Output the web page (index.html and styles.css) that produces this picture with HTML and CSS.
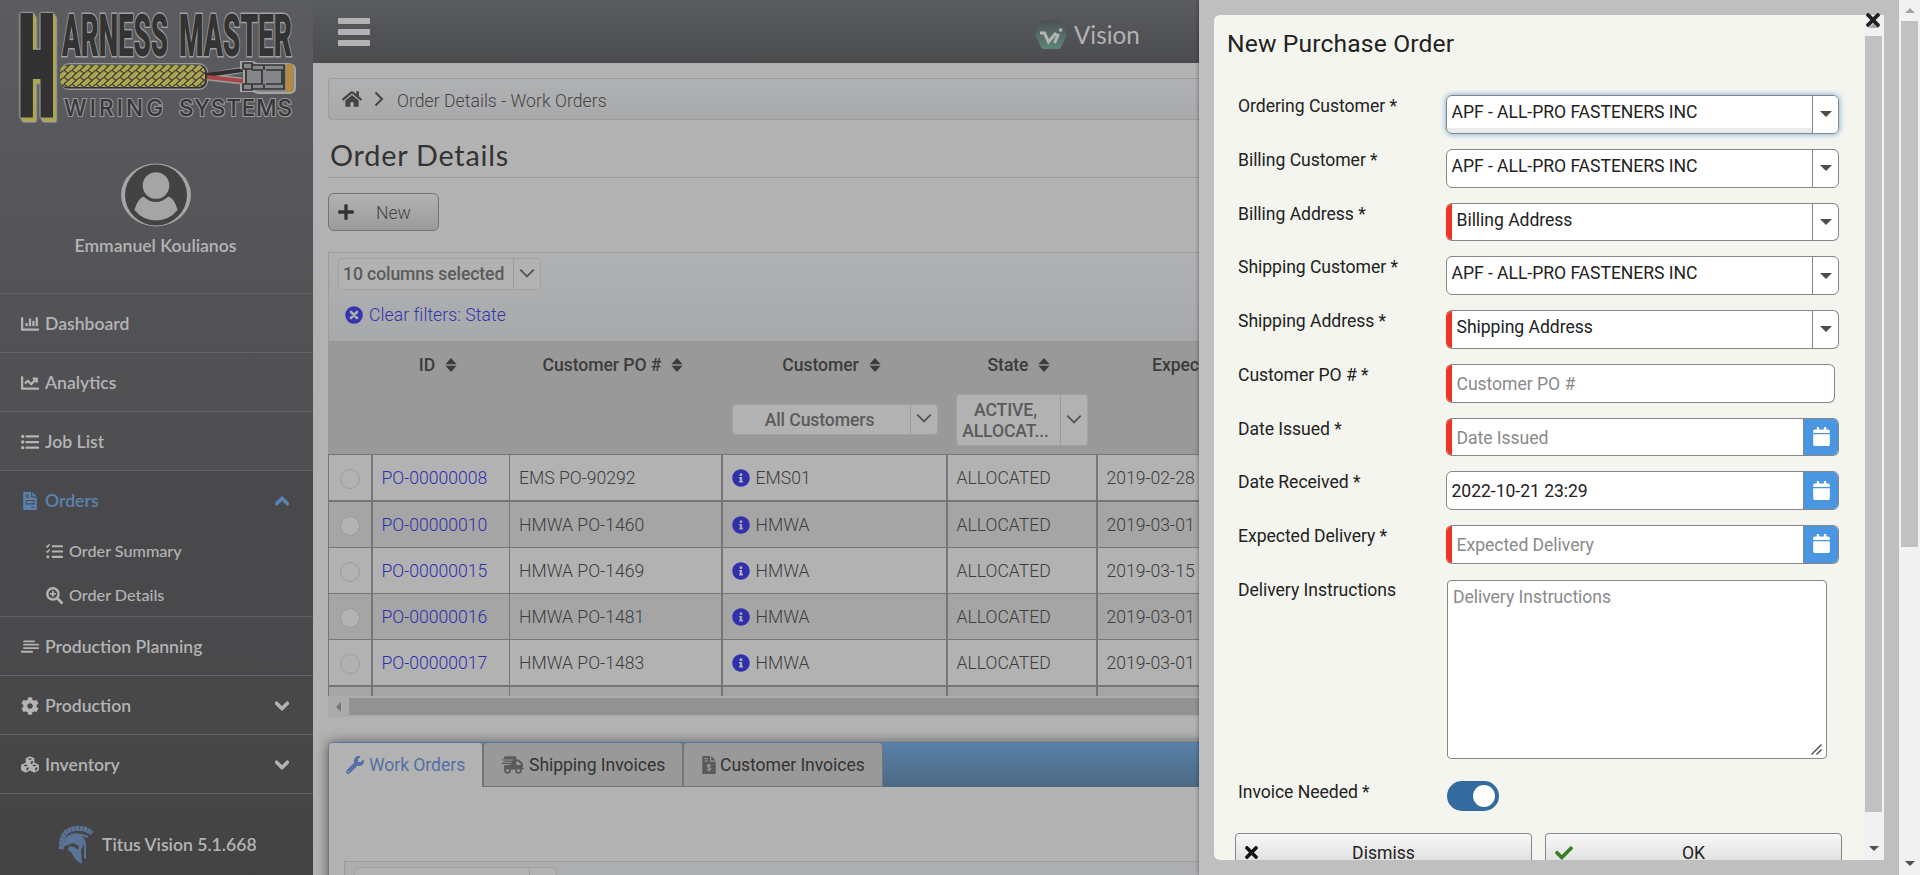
FILE: index.html
```html
<!DOCTYPE html>
<html lang="en">
<head>
<meta charset="utf-8">
<title>Order Details - Work Orders</title>
<link rel="stylesheet" href="styles.css">
</head>
<body>
<svg class="defs" width="0" height="0" aria-hidden="true">
  <symbol id="i-bar" viewBox="0 0 512 512"><path d="M332.8 320h38.400c6.400 0 12.800-6.400 12.800-12.800V172.800c0-6.400-6.400-12.800-12.800-12.800h-38.400c-6.400 0-12.800 6.400-12.800 12.800v134.400c0 6.400 6.400 12.800 12.800 12.800zm96 0h38.400c6.400 0 12.800-6.400 12.800-12.800V76.800c0-6.400-6.400-12.800-12.800-12.800h-38.400c-6.400 0-12.800 6.400-12.800 12.800v230.400c0 6.400 6.400 12.800 12.800 12.800zm-288 0h38.400c6.400 0 12.800-6.400 12.800-12.800v-70.400c0-6.400-6.400-12.800-12.800-12.800h-38.400c-6.400 0-12.800 6.400-12.800 12.800v70.400c0 6.400 6.400 12.800 12.800 12.800zm96 0h38.400c6.400 0 12.800-6.400 12.800-12.800V108.800c0-6.400-6.400-12.800-12.800-12.800h-38.400c-6.400 0-12.800 6.400-12.800 12.800v198.400c0 6.400 6.400 12.800 12.800 12.800zM496 384H64V80c0-8.840-7.160-16-16-16H16C7.160 64 0 71.160 0 80v336c0 17.670 14.330 32 32 32h464c8.840 0 16-7.160 16-16v-32c0-8.840-7.160-16-16-16z"/></symbol>
  <symbol id="i-line" viewBox="0 0 512 512"><path d="M496 384H64V80c0-8.840-7.160-16-16-16H16C7.160 64 0 71.160 0 80v336c0 17.670 14.330 32 32 32h464c8.840 0 16-7.160 16-16v-32c0-8.840-7.160-16-16-16zM464 96H345.940c-21.380 0-32.090 25.850-16.970 40.970l32.400 32.400L288 242.750l-73.370-73.370c-12.500-12.500-32.760-12.500-45.250 0l-68.690 68.690c-6.250 6.250-6.250 16.380 0 22.630l22.620 22.620c6.250 6.250 16.380 6.250 22.630 0L192 237.250l73.370 73.370c12.500 12.500 32.760 12.500 45.250 0l96-96 32.400 32.400c15.120 15.120 40.970 4.410 40.970-16.970V112c.01-8.840-7.150-16-15.990-16z"/></symbol>
  <symbol id="i-list" viewBox="0 0 512 512"><circle cx="48" cy="96" r="48"/><circle cx="48" cy="256" r="48"/><circle cx="48" cy="416" r="48"/><rect x="128" y="64" width="384" height="64" rx="16"/><rect x="128" y="224" width="384" height="64" rx="16"/><rect x="128" y="384" width="384" height="64" rx="16"/></symbol>
  <symbol id="i-tasks" viewBox="0 0 512 512"><path d="M10 85l35 32 70-84M10 245l35 32 70-84" fill="none" stroke="currentColor" stroke-width="42"/><circle cx="56" cy="416" r="46"/><rect x="176" y="64" width="336" height="64" rx="16"/><rect x="176" y="224" width="336" height="64" rx="16"/><rect x="176" y="384" width="336" height="64" rx="16"/></symbol>
  <symbol id="i-file" viewBox="0 0 384 512"><path fill-rule="evenodd" d="M24 0h200v136c0 13 11 24 24 24h136v328a24 24 0 0 1-24 24H24a24 24 0 0 1-24-24V24A24 24 0 0 1 24 0zM64 64v32h96V64zM64 128v32h96v-32zM64 224v128h256V224zM96 256h192v64H96zM224 416v32h96v-32zM256 0l128 128H256z"/></symbol>
  <symbol id="i-zoom" viewBox="0 0 512 512"><circle cx="208" cy="208" r="170" fill="none" stroke="currentColor" stroke-width="72"/><path d="M208 120v176M120 208h176" fill="none" stroke="currentColor" stroke-width="52"/><path d="M340 340l132 132" fill="none" stroke="currentColor" stroke-width="84" stroke-linecap="round"/></symbol>
  <symbol id="i-stream" viewBox="0 0 512 512"><rect x="64" y="70" width="330" height="50" rx="12"/><rect x="64" y="165" width="448" height="50" rx="12"/><rect x="64" y="260" width="448" height="50" rx="12"/><rect x="0" y="365" width="340" height="54" rx="12"/></symbol>
  <symbol id="i-cog" viewBox="0 0 512 512"><path d="M487.400 315.700l-42.600-24.600c4.300-23.200 4.300-47 0-70.200l42.600-24.600c4.900-2.800 7.100-8.600 5.500-14-11.100-35.600-30-67.800-54.700-94.600-3.800-4.100-10-5.100-14.800-2.300L380.800 110c-17.900-15.400-38.500-27.300-60.800-35.100V25.800c0-5.600-3.900-10.500-9.400-11.700-36.700-8.200-74.300-7.800-109.200 0-5.500 1.200-9.400 6.100-9.400 11.700V75c-22.200 7.900-42.800 19.800-60.800 35.100L88.700 85.500c-4.900-2.800-11-1.900-14.800 2.300-24.700 26.700-43.600 58.900-54.700 94.600-1.700 5.400.6 11.200 5.500 14L67.300 221c-4.300 23.200-4.300 47 0 70.200l-42.600 24.600c-4.900 2.800-7.100 8.600-5.500 14 11.100 35.600 30 67.800 54.700 94.600 3.800 4.100 10 5.100 14.800 2.300l42.600-24.600c17.900 15.400 38.500 27.300 60.800 35.100v49.200c0 5.600 3.900 10.500 9.400 11.700 36.700 8.200 74.300 7.800 109.200 0 5.500-1.200 9.400-6.100 9.400-11.700v-49.200c22.200-7.900 42.800-19.800 60.800-35.100l42.600 24.600c4.900 2.800 11 1.900 14.800-2.300 24.700-26.700 43.600-58.900 54.700-94.600 1.500-5.500-.7-11.300-5.600-14.100zM256 336c-44.100 0-80-35.900-80-80s35.900-80 80-80 80 35.900 80 80-35.900 80-80 80z"/></symbol>
  <symbol id="i-cubes" viewBox="0 0 512 512"><path fill-rule="evenodd" d="M256 10l110 44q12 6 12 20v120l116 48q16 7 16 22v126q0 14-12 20l-108 58q-12 5-24 0l-110-56-110 56q-12 5-24 0L14 410q-12-6-12-20V264q0-15 14-22l118-48V74q0-14 12-20zM256 62l-66 26 66 28 66-28zM278 158v74l60-26v-74zM132 244l-66 28 66 28 66-28zM154 342v76l62-32v-72zM380 244l-66 28 66 28 66-28zM402 342v76l62-32v-72z"/></symbol>
  <symbol id="i-down" viewBox="0 0 448 512"><path d="M207.029 381.476L12.686 187.132c-9.373-9.373-9.373-24.569 0-33.941l22.667-22.667c9.357-9.357 24.522-9.375 33.901-.04L224 284.505l154.745-154.021c9.379-9.335 24.544-9.317 33.901.04l22.667 22.667c9.373 9.373 9.373 24.569 0 33.941L240.971 381.476c-9.373 9.372-24.569 9.372-33.942 0z" stroke="currentColor" stroke-width="34"/></symbol>
  <symbol id="i-thin" viewBox="0 0 16 16"><path d="M2 5l6 6 6-6" fill="none" stroke="currentColor" stroke-width="1.700"/></symbol>
  <symbol id="i-home" viewBox="0 0 576 512"><path d="M280.370 148.260L96 300.110V464a16 16 0 0 0 16 16l112.060-.29a16 16 0 0 0 15.920-16V368a16 16 0 0 1 16-16h64a16 16 0 0 1 16 16v95.640a16 16 0 0 0 16 16.050L464 480a16 16 0 0 0 16-16V300L295.670 148.260a12.190 12.190 0 0 0-15.300 0zM571.600 251.470L488 182.560V44.050a12 12 0 0 0-12-12h-56a12 12 0 0 0-12 12v72.610L318.470 43a48 48 0 0 0-61 0L4.340 251.470a12 12 0 0 0-1.600 16.900l25.500 31A12 12 0 0 0 45.150 301l235.220-193.740a12.190 12.190 0 0 1 15.300 0L530.900 301a12 12 0 0 0 16.900-1.600l25.500-31a12 12 0 0 0-1.700-16.930z"/></symbol>
  <symbol id="i-plus" viewBox="0 0 448 512"><path d="M416 208H272V64c0-17.670-14.330-32-32-32h-32c-17.670 0-32 14.330-32 32v144H32c-17.670 0-32 14.330-32 32v32c0 17.670 14.330 32 32 32h144v144c0 17.670 14.330 32 32 32h32c17.670 0 32-14.330 32-32V304h144c17.670 0 32-14.330 32-32v-32c0-17.670-14.330-32-32-32z"/></symbol>
  <symbol id="i-clear" viewBox="0 0 512 512"><circle cx="256" cy="256" r="250"/><path d="M170 170l172 172M342 170L170 342" fill="none" stroke="#acadaf" stroke-width="76" stroke-linecap="round"/></symbol>
  <symbol id="i-info" viewBox="0 0 512 512"><path d="M256 8C119.043 8 8 119.083 8 256c0 136.997 111.043 248 248 248s248-111.003 248-248C504 119.083 392.957 8 256 8zm0 110c23.196 0 42 18.804 42 42s-18.804 42-42 42-42-18.804-42-42 18.804-42 42-42zm56 254c0 6.627-5.373 12-12 12h-88c-6.627 0-12-5.373-12-12v-24c0-6.627 5.373-12 12-12h12v-64h-12c-6.627 0-12-5.373-12-12v-24c0-6.627 5.373-12 12-12h64c6.627 0 12 5.373 12 12v100h12c6.627 0 12 5.373 12 12v24z"/></symbol>
  <symbol id="i-sort" viewBox="0 0 12 16"><path d="M6 1l5.600 6.200H.4zM6 15l5.600-6.200H.4z"/></symbol>
  <symbol id="i-wrench" viewBox="0 0 512 512"><path d="M507.730 109.100c-2.240-9.030-13.540-12.090-20.120-5.510l-74.360 74.360-67.880-11.310-11.310-67.880 74.360-74.360c6.620-6.620 3.430-17.900-5.660-20.160-47.380-11.740-99.550.91-136.580 37.930-39.640 39.640-50.550 97.100-34.050 147.200L18.740 402.760c-24.990 24.990-24.990 65.510 0 90.500 24.990 24.990 65.510 24.990 90.500 0l213.210-213.210c50.120 16.710 107.470 5.680 147.370-34.220 37.070-37.070 49.700-89.320 37.910-136.730zM64 472c-13.250 0-24-10.750-24-24 0-13.260 10.750-24 24-24s24 10.740 24 24c0 13.250-10.750 24-24 24z"/></symbol>
  <symbol id="i-truck" viewBox="0 0 640 512"><path fill-rule="evenodd" d="M96 0h288a32 32 0 0 1 32 32v64h62q18 0 30 12l84 84q16 14 16 34v126h16q16 0 16 16t-16 16h-48H64V256h176q8 0 8-8v-16q0-8-8-8H8q-8 0-8-8v-16q0-8 8-8h268q8 0 8-8v-16q0-8-8-8H40q-8 0-8-8v-16q0-8 8-8h268q8 0 8-8v-16q0-8-8-8H8q-8 0-8-8V80q0-8 8-8h56V32A32 32 0 0 1 96 0zM416 144v112h144l-96-112z"/><circle cx="160" cy="416" r="70" fill="#999" stroke="currentColor" stroke-width="52"/><circle cx="480" cy="416" r="70" fill="#999" stroke="currentColor" stroke-width="52"/></symbol>
  <symbol id="i-invoice" viewBox="0 0 384 512"><path d="M24 0h200v136c0 13 11 24 24 24h136v328a24 24 0 0 1-24 24H24a24 24 0 0 1-24-24V24A24 24 0 0 1 24 0zM256 0l128 128H256z"/><path d="M64 80h96M64 144h96" stroke="#999" stroke-width="30"/><path d="M242 274q-18-24-52-22-48 4-44 38 4 26 46 38 48 12 48 42-2 34-48 36-38 0-56-26M192 222v220" fill="none" stroke="#999" stroke-width="32"/></symbol>
  <symbol id="i-x" viewBox="0 0 352 352"><path transform="translate(0 -80)" d="M242.720 256l100.070-100.070c12.280-12.280 12.280-32.190 0-44.480l-22.240-22.240c-12.280-12.280-32.190-12.280-44.480 0L176 189.280 75.930 89.210c-12.280-12.280-32.190-12.280-44.480 0L9.210 111.450c-12.280 12.280-12.280 32.190 0 44.480L109.280 256 9.210 356.070c-12.280 12.280-12.280 32.190 0 44.480l22.240 22.240c12.280 12.280 32.200 12.280 44.480 0L176 322.720l100.070 100.070c12.280 12.280 32.200 12.280 44.480 0l22.240-22.240c12.280-12.280 12.280-32.190 0-44.480L242.720 256z"/></symbol>
  <symbol id="i-check" viewBox="0 0 512 512"><path d="M173.898 439.404l-166.400-166.400c-9.997-9.997-9.997-26.206 0-36.204l36.203-36.204c9.997-9.998 26.207-9.998 36.204 0L192 312.690 432.095 72.596c9.997-9.997 26.207-9.997 36.204 0l36.203 36.204c9.997 9.997 9.997 26.206 0 36.204l-294.400 294.401c-9.998 9.997-26.207 9.997-36.204-.001z"/></symbol>
  <symbol id="i-cal" viewBox="0 0 448 512"><path d="M12 192h424c6.600 0 12 5.400 12 12v260c0 26.500-21.500 48-48 48H48c-26.500 0-48-21.500-48-48V204c0-6.600 5.400-12 12-12zm436-44v-36c0-26.500-21.500-48-48-48h-48V12c0-6.600-5.400-12-12-12h-40c-6.600 0-12 5.400-12 12v52H160V12c0-6.600-5.400-12-12-12h-40c-6.600 0-12 5.400-12 12v52H48C21.500 64 0 85.500 0 112v36c0 6.600 5.400 12 12 12h424c6.600 0 12-5.400 12-12z"/></symbol>
</svg>

<div class="app">
  <aside class="sidebar">
    <svg class="brand" viewBox="0 0 313 140" width="313" height="140">
      <defs>
        <pattern id="braid" width="8" height="7" patternUnits="userSpaceOnUse">
          <rect width="8" height="7" fill="#aca552"/>
          <path d="M0 0l4 3.500L8 0M0 7l4-3.500" fill="none" stroke="#3a3a34" stroke-width="1.100"/>
        </pattern>
      </defs>
      <g class="big-h"><text transform="translate(20 112) scale(.365 1)">H</text></g>
      <rect x="60" y="63" width="148" height="27" rx="9" fill="#9b9b9b"/>
      <rect x="60" y="64.500" width="147" height="24" rx="8" fill="#333"/>
      <rect x="60" y="65" width="145" height="22" rx="7" fill="url(#braid)"/>
      <path d="M207 76l35-6" stroke="#9b9b9b" stroke-width="6"/><path d="M207 77l35 4" stroke="#9b9b9b" stroke-width="7"/>
      <path d="M206 75l37-5" stroke="#2d2d2d" stroke-width="4"/><path d="M207 77l36 4" stroke="#a94545" stroke-width="4"/>
      <path d="M243 62h10l4 2h31q7 0 7 6v18q0 5-7 5h-30l-5 -2h-12v-6l3-2V70l-3-2v-6z" fill="#858689" stroke="#a5a5a5" stroke-width="2"/>
      <path d="M243 63h9v6h-9zM243 84h9v6h-9zM246 69v15M252 65h32v24h-32M252 70h10v14h-10M266 70h16v14h-16M264 65v5M264 84v5" fill="none" stroke="#333" stroke-width="1.700"/>
      <rect x="286" y="64" width="7" height="28" rx="2" fill="#b28a42"/>
      <text class="name" x="62" y="56" textLength="106" lengthAdjust="spacingAndGlyphs">ARNESS</text>
      <text class="name" x="179" y="56" textLength="113" lengthAdjust="spacingAndGlyphs">MASTER</text>
      <text class="sub" x="64" y="116" textLength="99" lengthAdjust="spacing">WIRING</text>
      <text class="sub" x="179" y="116" textLength="113" lengthAdjust="spacing">SYSTEMS</text>
    </svg>
    <div class="profile">
      <svg width="70" height="64" viewBox="0 0 70 64"><ellipse cx="35" cy="32" rx="35" ry="31.500" fill="#a5a5a5"/><ellipse cx="35" cy="32" rx="31" ry="30.500" fill="#434343"/><circle cx="35" cy="22.500" r="13.300" fill="#a5a5a5"/><path d="M13.500 47q3-11 9-13.500 12 11 25 0Q54 36 56.500 47 48 57.500 35 57.500T13.500 47z" fill="#a5a5a5"/></svg>
      <span>Emmanuel Koulianos</span>
    </div>
    <nav class="menu">
      <div class="item"><svg class="ic"><use href="#i-bar"/></svg><span>Dashboard</span></div>
      <div class="item"><svg class="ic"><use href="#i-line"/></svg><span>Analytics</span></div>
      <div class="item"><svg class="ic"><use href="#i-list"/></svg><span>Job List</span></div>
      <div class="group">
        <div class="item active"><svg class="ic"><use href="#i-file"/></svg><span>Orders</span><svg class="caret up"><use href="#i-down"/></svg></div>
        <div class="subitem"><svg class="ic"><use href="#i-tasks"/></svg><span>Order Summary</span></div>
        <div class="subitem"><svg class="ic"><use href="#i-zoom"/></svg><span>Order Details</span></div>
      </div>
      <div class="item"><svg class="ic"><use href="#i-stream"/></svg><span>Production Planning</span></div>
      <div class="item"><svg class="ic"><use href="#i-cog"/></svg><span>Production</span><svg class="caret"><use href="#i-down"/></svg></div>
      <div class="item"><svg class="ic"><use href="#i-cubes"/></svg><span>Inventory</span><svg class="caret"><use href="#i-down"/></svg></div>
    </nav>
    <div class="version">
      <svg width="36" height="41" viewBox="0 0 36 41"><path d="M2.500 25Q1 6 17 4.500q10-1 16 5" fill="none" stroke="#5b7396" stroke-width="5" stroke-dasharray="3.500 .5"/><path d="M5 17Q13 6 29 13" fill="none" stroke="#5b7396" stroke-width="2"/><path d="M4 20Q9 10 19 11q8 1 8 11v13l-2-1V20l-3 6 1 14q-8-4-10-11l-4-3 1-4 5 1 4 3 1-4-6-3-8 3q-3 2-2 7-3-7 0-12z" fill="#5b7396"/></svg>
      <span>Titus Vision 5.1.668</span>
    </div>
  </aside>

  <main class="main">
    <header class="topbar">
      <div class="burger"><i></i><i></i><i></i></div>
      <div class="product">
        <svg width="32" height="30" viewBox="0 0 32 30"><defs><linearGradient id="hex" x1="0" y1="0" x2="0" y2="1"><stop offset="0" stop-color="#4c5053"/><stop offset="1" stop-color="#5c8579"/></linearGradient></defs><path d="M9 0h14q2 0 3 2l5 10q1 3 0 5l-5 10q-1 2-3 2H9q-2 0-3-2L1 17q-1-2 0-5L6 2Q7 0 9 0z" fill="url(#hex)"/><path d="M5 13h4.500l4 9 7.500-9M19.500 23l4-9" fill="none" stroke="#b5b5b5" stroke-width="3"/><path d="M25 11.500l1.200-3" stroke="#b5b5b5" stroke-width="3"/></svg>
        <span>Vision</span>
      </div>
    </header>
    <div class="crumbs"><svg class="home"><use href="#i-home"/></svg><svg class="sep" viewBox="0 0 10 16"><path d="M1.500 1.500L8 8l-6.500 6.500" fill="none" stroke="#444" stroke-width="2"/></svg><span>Order Details - Work Orders</span></div>
    <h1>Order Details</h1>
    <button class="new"><svg><use href="#i-plus"/></svg><span>New</span></button>

    <section class="grid-panel">
      <div class="tools">
        <div class="pick cols"><span>10 columns selected</span><b><svg><use href="#i-thin"/></svg></b></div>
        <div class="clear"><svg><use href="#i-clear"/></svg>Clear filters: State</div>
      </div>
      <div class="thead">
        <div></div>
        <div><p>ID<svg><use href="#i-sort"/></svg></p></div>
        <div><p>Customer PO #<svg><use href="#i-sort"/></svg></p></div>
        <div><p>Customer<svg><use href="#i-sort"/></svg></p><div class="pick cust"><span>All Customers</span><b><svg><use href="#i-thin"/></svg></b></div></div>
        <div><p>State<svg><use href="#i-sort"/></svg></p><div class="pick state"><span>ACTIVE, ALLOCAT...</span><b><svg><use href="#i-thin"/></svg></b></div></div>
        <div class="exp"><p>Expected</p></div>
      </div>
      <div class="rows">
        <div class="row thick"><div><i class="radio"></i></div><div class="link">PO-00000008</div><div>EMS PO-90292</div><div><svg><use href="#i-info"/></svg>EMS01</div><div>ALLOCATED</div><div>2019-02-28</div></div>
        <div class="row alt"><div><i class="radio"></i></div><div class="link">PO-00000010</div><div>HMWA PO-1460</div><div><svg><use href="#i-info"/></svg>HMWA</div><div>ALLOCATED</div><div>2019-03-01</div></div>
        <div class="row"><div><i class="radio"></i></div><div class="link">PO-00000015</div><div>HMWA PO-1469</div><div><svg><use href="#i-info"/></svg>HMWA</div><div>ALLOCATED</div><div>2019-03-15</div></div>
        <div class="row alt"><div><i class="radio"></i></div><div class="link">PO-00000016</div><div>HMWA PO-1481</div><div><svg><use href="#i-info"/></svg>HMWA</div><div>ALLOCATED</div><div>2019-03-01</div></div>
        <div class="row thick"><div><i class="radio"></i></div><div class="link">PO-00000017</div><div>HMWA PO-1483</div><div><svg><use href="#i-info"/></svg>HMWA</div><div>ALLOCATED</div><div>2019-03-01</div></div>
        <div class="row alt stub"><div></div><div></div><div></div><div></div><div></div><div></div></div>
      </div>
      <div class="hscroll"><svg width="5" height="10" viewBox="0 0 5 10"><path d="M5 0v10L0 5z" fill="#777"/></svg><i></i></div>
    </section>

    <section class="tabs-panel">
      <div class="tabs">
        <div class="tab on"><svg class="w"><use href="#i-wrench"/></svg>Work Orders</div>
        <div class="tab two"><svg class="t"><use href="#i-truck"/></svg>Shipping Invoices</div>
        <div class="tab three"><svg class="f"><use href="#i-invoice"/></svg>Customer Invoices</div>
      </div>
      <div class="inner"><div class="pick"><span></span><b></b></div></div>
    </section>
  </main>
</div>

<div class="drawer">
  <div class="dialog">
    <div class="form">
      <h2>New Purchase Order</h2>
      <div class="field"><label>Ordering Customer *</label><div class="sel focus"><span>APF - ALL-PRO FASTENERS INC</span><b></b></div></div>
      <div class="field"><label>Billing Customer *</label><div class="sel"><span>APF - ALL-PRO FASTENERS INC</span><b></b></div></div>
      <div class="field"><label>Billing Address *</label><div class="sel req"><span>Billing Address</span><b></b></div></div>
      <div class="field"><label>Shipping Customer *</label><div class="sel"><span>APF - ALL-PRO FASTENERS INC</span><b></b></div></div>
      <div class="field"><label>Shipping Address *</label><div class="sel req"><span>Shipping Address</span><b></b></div></div>
      <div class="field"><label>Customer PO # *</label><div class="inp req short"><span class="ph">Customer PO #</span></div></div>
      <div class="field"><label>Date Issued *</label><div class="inp req"><span class="ph">Date Issued</span><em><svg><use href="#i-cal"/></svg></em></div></div>
      <div class="field"><label>Date Received *</label><div class="inp"><span>2022-10-21 23:29</span><em><svg><use href="#i-cal"/></svg></em></div></div>
      <div class="field"><label>Expected Delivery *</label><div class="inp req"><span class="ph">Expected Delivery</span><em><svg><use href="#i-cal"/></svg></em></div></div>
      <div class="field tall"><label>Delivery Instructions</label><div class="area"><span class="ph">Delivery Instructions</span><svg width="11" height="11" viewBox="0 0 11 11"><path d="M.5 10.500l10-10M5.500 10.500l5-5" stroke="#444" stroke-width="1.300"/></svg></div></div>
      <div class="field toggle-row"><label>Invoice Needed *</label><div class="toggle"><i></i></div></div>
      <div class="actions">
        <button><svg class="bx"><use href="#i-x"/></svg>Dismiss</button>
        <button><svg class="bc"><use href="#i-check"/></svg>OK</button>
      </div>
    </div>
    <div class="vscroll in"><span class="up"></span><i></i><span class="dn"></span></div>
  </div>
  <svg class="close"><use href="#i-x"/></svg>
</div>
<div class="vscroll page"><span class="up"></span><i></i><span class="dn"></span></div>
</body>
</html>
```
FILE: styles.css
```css
* { box-sizing: border-box; }
body { margin: 0; width: 1920px; height: 875px; overflow: hidden; position: relative; font: 300 17.6px/22px Roboto, sans-serif; color: #333; background: #b2b2b2; }
h1, h2, p { margin: 0; font-weight: 400; }
svg { fill: currentColor; flex: none; }
.defs { position: absolute; }
.app { display: flex; width: 1899px; height: 875px; overflow: hidden; }

.sidebar { flex: none; width: 313px; height: 875px; background: linear-gradient(#5b5c60, #434344); color: #b4b4b4; font-family: "Trebuchet MS", Lato, sans-serif; font-weight: 600; font-size: 17.600px; display: flex; flex-direction: column; }
.brand { display: block; }
.brand text { font-family: Roboto, sans-serif; }
.big-h { filter: drop-shadow(1px 1px 0 #aca552) drop-shadow(2px 3px 0 #aca552) drop-shadow(0 0 1px #bbb) drop-shadow(0 0 .5px #bbb); }
.big-h text { font-weight: 900; font-size: 130px; fill: #323232; stroke: #323232; stroke-width: 12px; }
.brand .name { font-weight: 900; font-size: 58.500px; fill: #333; stroke: #a0a0a0; stroke-width: 3px; paint-order: stroke; }
.brand .sub { font-family: Inter, sans-serif; font-weight: 500; font-size: 22.500px; fill: #37373a; stroke: #999; stroke-width: 2.200px; paint-order: stroke; }
.profile { height: 153px; padding: 23px 2px 0 0; display: flex; flex-direction: column; align-items: center; gap: 8px; }
.item { height: 59px; border-top: 1px solid #626366; padding: 1px 24px 0 21px; display: flex; align-items: center; gap: 6px; }
.ic { width: 18px; height: 18px; }
.caret { width: 14px; height: 16px; margin-left: auto; }
.caret.up { transform: rotate(180deg); }
.group { background: #49494c; height: 146px; }
.active { color: #5a83b0; }
.subitem { height: 44px; padding: 0 0 0 46px; display: flex; align-items: center; gap: 6px; font-size: 16.200px; font-weight: 500; }
.subitem .ic { width: 17px; height: 17px; }
.version { border-top: 1px solid #626366; flex: 1; padding: 20px 0 0 59px; display: flex; align-items: center; gap: 7px; }

.main { flex: 1; min-width: 0; }
.topbar { height: 63px; background: linear-gradient(#5b5c60, #4b4c4e); display: flex; align-items: center; }
.burger { width: 32px; margin: 1px 0 0 25px; display: grid; gap: 5px; }
.burger i { height: 6px; border-radius: 1px; background: #b2b2b2; }
.product { margin: 6px 0 0 665px; display: flex; align-items: center; gap: 7px; color: #b2b2b2; font: 400 24.200px/28px "Trebuchet MS", Lato, sans-serif; }
.crumbs { margin: 15px 0 0 15px; height: 42px; border: 1px solid #9c9c9c; border-radius: 4px; background: linear-gradient(#b0b1b3, #a7a9ab); display: flex; align-items: center; padding: 3px 0 0 13px; color: #444; letter-spacing: .04px; }
.home { width: 20px; height: 18px; margin-top: -4px; }
.sep { width: 10px; height: 16px; margin: -4px 13px 0 12px; }
.main h1 { margin: 16px 0 0 15px; padding-left: 2px; height: 42px; border-bottom: 1px solid #9c9c9c; font: 400 28.800px/39px "Trebuchet MS", Lato, sans-serif; letter-spacing: .78px; }
.new { display: flex; align-items: center; margin: 15px 0 0 15px; width: 111px; height: 38px; border: 1px solid #737373; border-radius: 6px; background: linear-gradient(#b2b2b2, #9b9b9b); font: inherit; color: #444; padding: 2px 0 0 9px; }
.new svg { width: 16px; height: 18px; color: #333; margin: -3px 22px 0 0; }

.grid-panel { margin: 21px 0 0 15px; }
.tools { height: 89px; border: 1px solid #9c9c9c; border-bottom: 0; background: linear-gradient(#b0b1b3, #a7a9ab); padding: 5px 0 0 9px; }
.pick { display: flex; background: #b2b2b2; border: 1px solid #a2a2a2; border-radius: 4px; color: #5b5b5b; font-weight: 500; letter-spacing: -.1px; }
.pick span { flex: 1; text-align: center; }
.pick b { border-left: 1px solid #9c9c9c; width: 27px; display: flex; align-items: center; justify-content: center; }
.pick svg { width: 18px; height: 18px; margin-top: -3px; color: #555; }
.cols { width: 203px; height: 32px; line-height: 31px; }
.cols span { text-align: left; padding-left: 4px; }
.clear { display: flex; align-items: center; gap: 6px; color: #3434ac; margin: 14px 0 0 7px; letter-spacing: .06px; }
.clear svg { width: 18px; height: 18px; }
.thead, .row { display: grid; grid-template-columns: 43px 138px 212px 225px 150px 475px; }
.thead { height: 113px; background: #999; font-weight: 500; color: #3c3c3c; }
.thead > div { padding-top: 13px; }
.thead p { font-weight: 500; letter-spacing: -.06px; display: flex; justify-content: center; align-items: center; gap: 10px; padding-right: 4px; }
.thead p svg { width: 12px; height: 16px; }
.thead .exp p { justify-content: flex-start; padding-left: 56px; }
.cust { margin: 28px 8px 0 11px; height: 31px; line-height: 31px; }
.cust span { padding-right: 4px; }
.state { margin: 18px 8px 0 10px; height: 52px; line-height: 21px; }
.state span { padding: 5px 8px 5px 2px; }
.rows { border-top: 1px solid #767676; height: 242px; overflow: hidden; }
.row { height: 46px; border-bottom: 1px solid #767676; color: #3d3d3d; }
.row.thick { height: 47px; border-bottom-width: 2px; }
.alt { background: #a5a5a5; }
.row > div { border-left: 2px solid #767676; padding-left: 8.500px; display: flex; align-items: center; }
.row > div:first-child { border-left-width: 1px; padding: 2px 0 0 11px; }
.row > div:nth-child(3) { border-left-width: 1px; padding-left: 9px; }
.row svg { width: 18px; height: 18px; color: #3030ac; margin-right: 6px; }
.row .link { color: #3030ac; padding-left: 8.500px; }
.radio { width: 20px; height: 20px; border: 1px solid #9b9b9b; border-radius: 50%; background: #b2b2b2; }
.hscroll { height: 21px; background: #ababab; display: flex; align-items: center; padding-left: 8px; }
.hscroll i { height: 17px; flex: 1; background: #929292; margin-left: 8px; }

.tabs-panel { margin: 25px 0 0 15px; height: 150px; border-left: 1px solid #777; border-top-left-radius: 5px; background: #b2b2b2; box-shadow: 0 0 12px rgba(0, 0, 0, .5); }
.tabs { height: 45px; border-top: 1px solid #557a9f; border-top-left-radius: 5px; background: linear-gradient(#5880a8, #4d6983); display: flex; }
.tab { height: 44px; border-bottom: 1px solid #757575; border-right: 2px solid #757575; border-radius: 4px 4px 0 0; background: #999; display: flex; align-items: center; white-space: nowrap; color: #333; font-weight: 400; letter-spacing: -.06px; }
.tab.on { width: 155px; background: #b2b2b2; border-bottom: 0; color: #5370a5; padding-left: 17px; gap: 5px; }
.two { width: 200px; padding-left: 18px; gap: 5px; }
.three { width: 199px; padding-left: 18px; gap: 4px; border-right-width: 1px; }
.tab svg { color: #5b5b5b; height: 18px; }
.tab .w { width: 18px; color: #5370a5; }
.tab .t { width: 22px; }
.tab .f { width: 14px; }
.inner { margin: 74px 0 0 15px; height: 40px; border: 1px solid #9c9c9c; background: #adaeb0; padding: 5px 0 0 9px; }
.inner .pick { width: 203px; height: 34px; }

.drawer { position: absolute; left: 1199px; top: 0; width: 700px; height: 875px; background: #bfbfbf; box-shadow: 0 0 4px rgba(0, 0, 0, .45); padding: 15px; font-weight: 400; color: #222; letter-spacing: -.05px; }
.dialog { width: 670px; height: 845px; border-radius: 6px 0 0 6px; overflow: hidden; background: #f4f5ee; display: flex; }
.form { width: 649px; flex: none; }
.form h2 { font-size: 24.640px; line-height: 30px; padding: 14px 0 0 13px; height: 80px; letter-spacing: .15px; }
.field { display: flex; height: 53.750px; padding-left: 24px; }
.field label { width: 208px; flex: none; line-height: 22px; }
.sel, .inp { width: 393px; height: 38.750px; border: 1px solid #868686; border-radius: 6px; background: #fff; display: flex; overflow: hidden; position: relative; }
.sel span { flex: 1; padding: 5px 0 0 4.500px; }
.sel b { width: 26px; height: 100%; border-left: 1px solid #868686; display: flex; align-items: center; justify-content: center; }
.sel b::after { content: ""; border: 6px solid transparent; border-top-color: #4d4d4d; border-bottom: 0; }
.sel.focus { box-shadow: 0 0 5px 1px #8db6dd; background: linear-gradient(#fff 32px, #eaeaea 32px); }
.sel.focus b { background: #fff; }
.req::before { content: ""; width: 5px; flex: none; background: #ee3524; }
.req { border-left-color: #ee3524; }
.inp span { flex: 1; line-height: 38px; padding-left: 4.500px; }
.inp em { width: 36px; margin: -1px -1px -1px 0; background: #4a96e0; border-left: 1px solid #868686; color: #fff; display: flex; align-items: center; justify-content: center; }
.inp em svg { width: 17px; height: 19px; margin-top: -1px; }
.short { width: 389px; }
.ph { color: #8a8a8a; }
.tall { height: 202px; }
.area { width: 380px; height: 179px; margin: 1px 0 0 1px; border: 1px solid #868686; border-radius: 4px; background: #fff; padding: 5px; display: flex; justify-content: space-between; }
.area svg { align-self: flex-end; margin: 0 -1px -2px 0; }
.toggle-row { height: 52px; }
.toggle { width: 52px; height: 30px; border-radius: 15px; background: #336a9f; padding: 4px; margin-left: 1px; display: flex; justify-content: flex-end; }
.toggle i { width: 22px; height: 22px; border-radius: 50%; background: #fff; }
.actions { display: flex; gap: 13px; padding-left: 21px; }
.actions button { width: 297px; height: 39px; border: 1px solid #868686; border-radius: 4px; background: linear-gradient(#f8f8f8, #d8d8d8); font: 400 17.600px/22px Roboto, sans-serif; color: #222; display: flex; align-items: center; justify-content: center; position: relative; padding-top: 2px; }
.actions svg { position: absolute; left: 9px; }
.bx { width: 13px; height: 13px; color: #111; }
.bc { width: 18px; height: 18px; color: #38801f; }
.close { position: absolute; left: 667px; top: 13px; width: 14px; height: 14px; color: #222; }

.vscroll { width: 21px; background: #f1f1f1; display: flex; flex-direction: column; align-items: center; }
.vscroll i { width: 17px; background: #c1c1c1; }
.vscroll span { height: 21px; display: flex; align-items: center; }
.vscroll span::after { content: ""; border: 5px solid transparent; }
.vscroll .up::after { border-bottom-color: #a3a3a3; border-top: 0; }
.vscroll .dn { margin-top: auto; }
.vscroll .dn::after { border-top-color: #505050; border-bottom: 0; }
.in { height: 845px; }
.in i { height: 776px; }
.in .dn { height: 24px; }
.page { position: absolute; left: 1899px; top: 0; height: 875px; }
.page i { height: 526px; }
.page .dn { height: 24px; }
```
